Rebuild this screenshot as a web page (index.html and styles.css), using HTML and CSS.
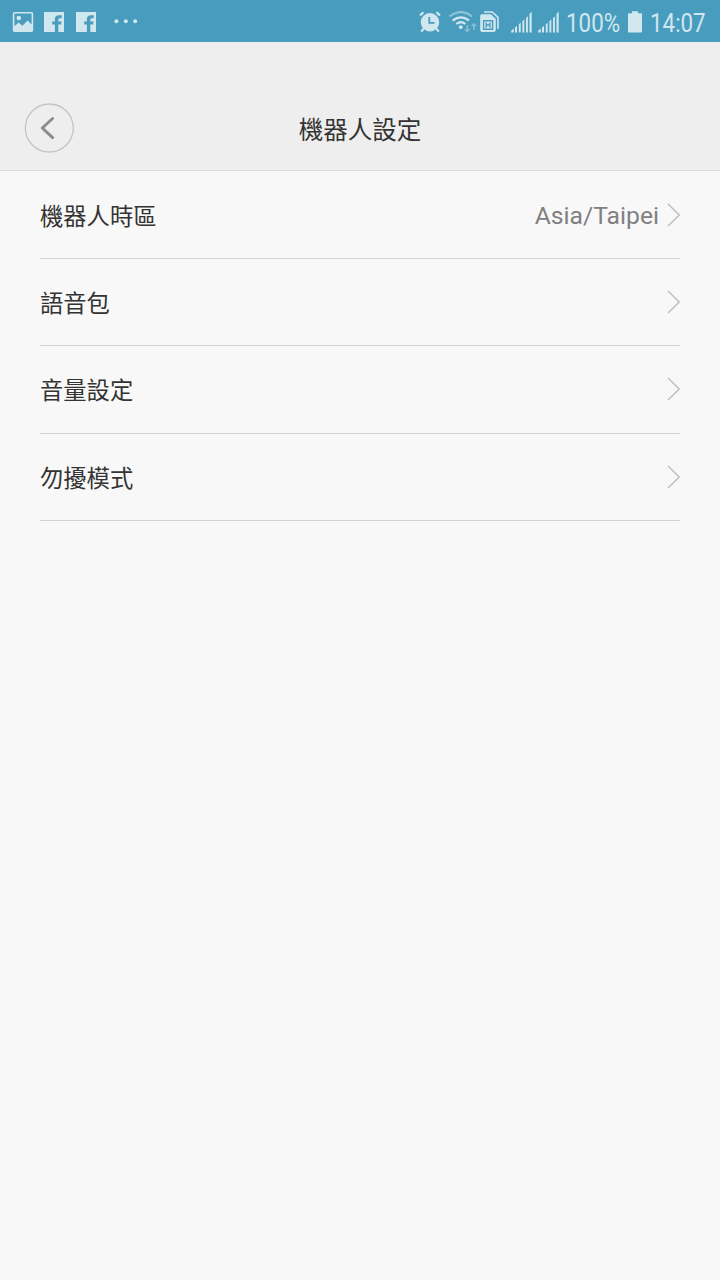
FILE: index.html
```html
<!DOCTYPE html>
<html lang="zh-Hant">
<head>
    <meta charset="UTF-8">
    <meta name="viewport" content="width=device-width, initial-scale=1.0">
    <title>機器人設定</title>
    <link rel="stylesheet" href="styles.css">
</head>
<body>
    <div class="status-bar">
        <div class="status-left">
            <svg class="icon-picture" width="22" height="22" viewBox="0 0 22 22">
                <path fill-rule="evenodd" d="M2.5 0H19.5Q21.2 0 21.2 1.7V18.3Q21.2 20 19.5 20H2.5Q0.8 20 0.8 18.3V1.7Q0.8 0 2.5 0ZM2.4 1.6V14.3L6.6 10.5L10.4 13.8L15.6 8.6L19.6 12.5V1.6Z"/>
                <circle cx="6.8" cy="6" r="2.3"/>
            </svg>
            <svg class="icon-facebook" width="20" height="20" viewBox="0 0 20 20">
                <path d="M0 0H20V20H14.3V12.6H17.1L17.6 9.4H14.3V7.6Q14.3 6.2 15.8 6.2H17.7V3.2H15Q10.9 3.2 10.9 7.2V9.4H8.2V12.6H10.9V20H0Z"/>
            </svg>
            <svg class="icon-facebook" width="20" height="20" viewBox="0 0 20 20">
                <path d="M0 0H20V20H14.3V12.6H17.1L17.6 9.4H14.3V7.6Q14.3 6.2 15.8 6.2H17.7V3.2H15Q10.9 3.2 10.9 7.2V9.4H8.2V12.6H10.9V20H0Z"/>
            </svg>
            <svg class="icon-more" width="26" height="20" viewBox="0 0 26 20">
                <circle cx="3.4" cy="9.3" r="2"/>
                <circle cx="12.8" cy="9.3" r="2"/>
                <circle cx="22.1" cy="9.3" r="2"/>
            </svg>
        </div>
        <div class="status-right">
            <!-- alarm -->
            <svg width="22" height="22" viewBox="0 0 22 22">
                <circle cx="11" cy="11.2" r="9.2"/>
                <path class="line" d="M1 4.4L4.5 1.2M17.5 1.2L21 4.4M4.7 17.5L2.3 20.6M17.3 17.5L19.7 20.6"/>
                <path class="cutout" d="M10.3 6V11.8H15.5"/>
            </svg>
            <!-- wifi -->
            <svg class="icon-wifi" width="28" height="22" viewBox="0 0 28 22">
                <path class="line faint" d="M0.5 5.5Q12 -3.3 23 5.5"/>
                <path class="line" d="M3.7 9.5Q12 3.2 20 9.5M7.3 13Q12 9.4 16.3 13"/>
                <circle cx="11.8" cy="16.2" r="1.9"/>
                <path class="arrow" d="M18.3 14V20.5M16 18L18.3 20.5L20.6 18M24.8 19V13M22.5 15.3L24.8 13L27.1 15.3"/>
            </svg>
            <!-- sim -->
            <svg class="icon-sim" width="20" height="22" viewBox="0 0 20 22">
                <path class="sim-back" d="M4 1H12.3L18 6.3V18"/>
                <path d="M2 3.2H11L15.8 7.9V19.1Q15.8 20.9 14 20.9H2Q0.2 20.9 0.2 19.1V5Q0.2 3.2 2 3.2Z"/>
                <path class="chip" d="M3.6 9.8H12.6V18.2H3.6ZM6.3 11.5V16.7M9.9 11.5V16.7M6.3 14H9.9"/>
            </svg>
            <!-- signal 1 -->
            <svg class="icon-signal" width="22" height="22" viewBox="0 0 22 22">
                <path d="M0.2 21.5V19.7L2.8 17.6V21.5ZM4 21.5V16.4L6 14.7V21.5ZM7.8 21.5V13.3L9.7 11.7V21.5ZM11.4 21.5V10.2L13.3 8.5V21.5ZM15 21.5V7L16.9 5.2V21.5ZM18.5 21.5V2.8L20.7 0.8V21.5Z"/>
            </svg>
            <!-- signal 2 -->
            <svg class="icon-signal-2" width="22" height="22" viewBox="0 0 22 22">
                <path d="M0.2 21.5V19.7L2.8 17.6V21.5ZM4 21.5V16.4L6 14.7V21.5ZM7.8 21.5V13.3L9.7 11.7V21.5ZM11.4 21.5V10.2L13.3 8.5V21.5ZM15 21.5V7L16.9 5.2V21.5ZM18.5 21.5V2.8L20.7 0.8V21.5Z"/>
            </svg>
            <span class="battery-text">100%</span>
            <svg class="icon-battery" width="14" height="22" viewBox="0 0 14 22">
                <path d="M4 0.3H10V2.3H13Q14 2.3 14 3.3V20.5Q14 21.5 13 21.5H1Q0 21.5 0 20.5V3.3Q0 2.3 1 2.3H4Z"/>
            </svg>
            <span class="clock">14:07</span>
        </div>
    </div>

    <div class="header">
        <button class="back-button" aria-label="返回">
            <svg width="50" height="50" viewBox="0 0 50 50">
                <circle cx="25.3" cy="25" r="24"/>
                <path d="M28.6 15.5L18.3 25L28.6 34.6"/>
            </svg>
        </button>
        <h1>機器人設定</h1>
    </div>

    <div class="settings-list">
        <div class="setting-row">
            <span class="label">機器人時區</span>
            <span class="value">Asia/Taipei</span>
            <svg class="chevron" width="14" height="24" viewBox="0 0 14 24"><path d="M2 1L13.2 12L2 23"/></svg>
        </div>
        <div class="setting-row">
            <span class="label">語音包</span>
            <svg class="chevron" width="14" height="24" viewBox="0 0 14 24"><path d="M2 1L13.2 12L2 23"/></svg>
        </div>
        <div class="setting-row">
            <span class="label">音量設定</span>
            <svg class="chevron" width="14" height="24" viewBox="0 0 14 24"><path d="M2 1L13.2 12L2 23"/></svg>
        </div>
        <div class="setting-row">
            <span class="label">勿擾模式</span>
            <svg class="chevron" width="14" height="24" viewBox="0 0 14 24"><path d="M2 1L13.2 12L2 23"/></svg>
        </div>
    </div>
</body>
</html>
```
FILE: styles.css
```css
body {
    font-family: Roboto, 'Noto Sans CJK TC', sans-serif;
    background-color: #f8f8f8;
    color: #333;
    margin: 0;
    min-height: 1280px;
}

svg {
    display: block;
    flex: none;
}

.status-bar {
    display: flex;
    justify-content: space-between;
    height: 42px;
    background-color: #489dbe;
    color: #d1e7ef;
}

.status-bar svg {
    fill: #d1e7ef;
}

.status-left {
    display: flex;
    padding: 12px 0 0 12px;
}

.status-left svg {
    margin-right: 11.6px;
}

.status-left .icon-picture {
    margin-right: 10.2px;
}

.status-left .icon-more {
    margin-left: 5.6px;
}

.status-right {
    display: flex;
    padding: 11px 12px 0 0;
}

.status-right .line {
    fill: none;
    stroke: #d1e7ef;
    stroke-width: 2.2;
}

.status-right .faint {
    stroke: #8fc3d8;
}

.status-right .cutout {
    fill: none;
    stroke: #489dbe;
    stroke-width: 1.8;
}

.status-right .arrow {
    fill: none;
    stroke: #83bdd3;
    stroke-width: 1.6;
}

.icon-wifi {
    margin-left: 8px;
}

.icon-sim {
    margin-left: 3px;
}

.icon-sim .sim-back {
    fill: none;
    stroke: #d1e7ef;
    stroke-width: 1.6;
}

.icon-sim .chip {
    fill: none;
    stroke: #489dbe;
    stroke-width: 1.4;
}

.icon-signal {
    margin-left: 11px;
}

.icon-signal-2 {
    margin-left: 5px;
}

.battery-text,
.clock {
    font-size: 26px;
    line-height: 24px;
    white-space: nowrap;
    transform-origin: left center;
    transform: scaleX(0.86);
}

.battery-text {
    width: 54px;
    margin-left: 6px;
}

.icon-battery {
    margin-left: 8px;
}

.clock {
    width: 58px;
    margin-left: 8px;
}

.header {
    display: grid;
    grid-template-columns: 50px 1fr 50px;
    align-items: center;
    height: 129px;
    padding: 44px 24px 0;
    box-sizing: border-box;
    background-color: #eee;
    border-bottom: 1px solid #dcdcdc;
}

.header h1 {
    margin: 0;
    padding-top: 5px;
    font-size: 24.5px;
    font-weight: 400;
    line-height: 36px;
    text-align: center;
}

.back-button {
    padding: 0 0 1px;
    border: none;
    background: none;
}

.back-button circle {
    fill: none;
    stroke: #c4c4c4;
    stroke-width: 1.3;
}

.back-button path {
    fill: none;
    stroke: #8c8c8c;
    stroke-width: 3;
    stroke-linecap: round;
    stroke-linejoin: round;
}

.settings-list {
    padding: 0.6px 40px 0;
}

.setting-row {
    display: flex;
    align-items: center;
    height: 87.33px;
    box-sizing: border-box;
    border-bottom: 1px solid #d4d4d4;
}

.label {
    flex: 1;
    font-size: 23.3px;
}

.value {
    margin-right: 7px;
    padding-top: 2px;
    font-size: 24.7px;
    color: #808080;
}

.chevron path {
    fill: none;
    stroke: #bdbdbd;
    stroke-width: 1.4;
}
```
